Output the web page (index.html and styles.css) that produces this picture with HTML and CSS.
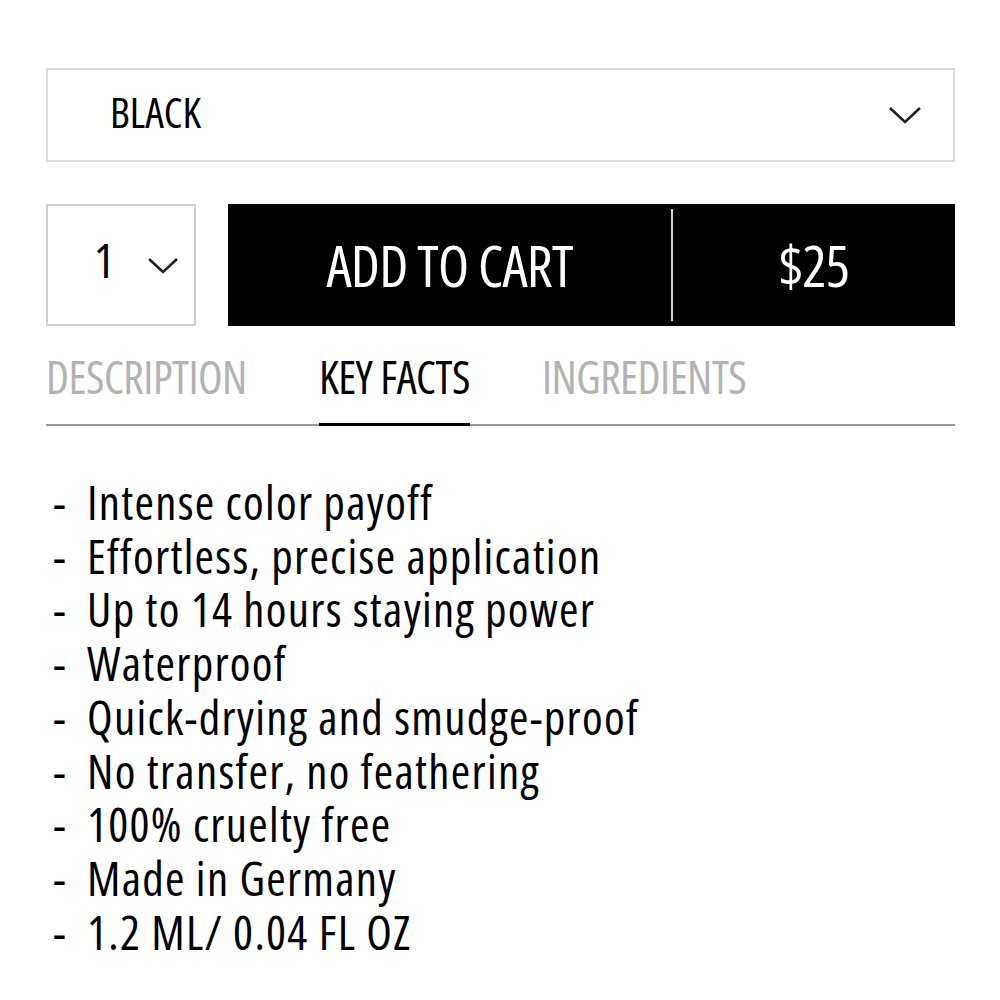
FILE: index.html
```html
<!DOCTYPE html>
<html>
<head>
  <title>Key Facts</title>
  <link rel="stylesheet" href="styles.css">
</head>
<body>
  <div class="product">
    <div class="shade-select">
      <span class="shade-name">BLACK</span>
      <svg class="chevron" width="34" height="20" viewBox="0 0 34 20"><path d="M2 3 L17 17 L32 3" fill="none" stroke="#222" stroke-width="2.6"/></svg>
    </div>

    <div class="buy-row">
      <div class="qty">
        <span class="qty-num">1</span>
        <svg class="chevron" width="32" height="18" viewBox="0 0 32 18"><path d="M2 3 L16 16 L30 3" fill="none" stroke="#222" stroke-width="2.6"/></svg>
      </div>
      <button class="cart-btn">
        <span class="cart-label">ADD TO CART</span>
        <span class="cart-divider"></span>
        <span class="cart-price">$25</span>
      </button>
    </div>

    <div class="tabs">
      <div class="tab">DESCRIPTION</div>
      <div class="tab active">KEY FACTS</div>
      <div class="tab">INGREDIENTS</div>
    </div>

    <ul class="facts">
      <li>Intense color payoff</li>
      <li>Effortless, precise application</li>
      <li>Up to 14 hours staying power</li>
      <li>Waterproof</li>
      <li>Quick-drying and smudge-proof</li>
      <li>No transfer, no feathering</li>
      <li>100% cruelty free</li>
      <li>Made in Germany</li>
      <li>1.2 ML/ 0.04 FL OZ</li>
    </ul>
  </div>
</body>
</html>
```

FILE: styles.css
```css
body {
  margin: 0;
  background: #fff;
  color: #000;
  font-family: "Open Sans", sans-serif;
  font-stretch: 75%;
}

.product {
  width: 909px;
  margin-left: 46px;
  padding-top: 68px;
}

.shade-select {
  border: 2px solid #dcdcdc;
  display: flex;
  align-items: center;
  justify-content: space-between;
  padding: 0 31px 6px 62px;
  height: 84px;
}

.shade-name {
  font-size: 42px;
  line-height: 42px;
}

.shade-select .chevron {
  margin-top: 6px;
}

.buy-row {
  display: flex;
  gap: 32px;
  margin-top: 42px;
  height: 122px;
}

.qty {
  width: 150px;
  border: 2px solid #cfcfcf;
  display: flex;
  align-items: center;
  padding: 0 0 10px 46px;
  gap: 33px;
  box-sizing: border-box;
}

.qty .chevron {
  margin-top: 10px;
}

.qty-num {
  font-size: 48px;
  line-height: 48px;
}

.cart-btn {
  flex: 1;
  background: #000;
  color: #fff;
  border: 0;
  display: flex;
  align-items: stretch;
  padding: 5px 0;
  font: inherit;
  cursor: pointer;
}

.cart-label,
.cart-price {
  display: flex;
  align-items: center;
  justify-content: center;
  font-size: 57px;
  line-height: 57px;
  letter-spacing: -0.8px;
}

.cart-label {
  width: 443px;
}

.cart-divider {
  width: 2px;
  background: #d0d0d0;
}

.cart-price {
  flex: 1;
}

.tabs {
  display: flex;
  gap: 72px;
  border-bottom: 2px solid #9a9a9a;
  padding-top: 28px;
}

.tab {
  font-size: 45px;
  line-height: 45px;
  letter-spacing: -0.5px;
  color: #b3b3b3;
  padding-bottom: 24px;
  margin-bottom: -2px;
  border-bottom: 3px solid transparent;
}

.tab.active {
  color: #000;
  border-bottom-color: #000;
}

.facts {
  list-style: none;
  margin: 50px 0 0;
  padding: 0;
}

.facts li {
  display: flex;
  font-size: 47px;
  line-height: 53.7px;
  letter-spacing: 1.3px;
  padding-left: 7px;
}

.facts li::before {
  content: "-";
  width: 34px;
  flex: none;
}
```
